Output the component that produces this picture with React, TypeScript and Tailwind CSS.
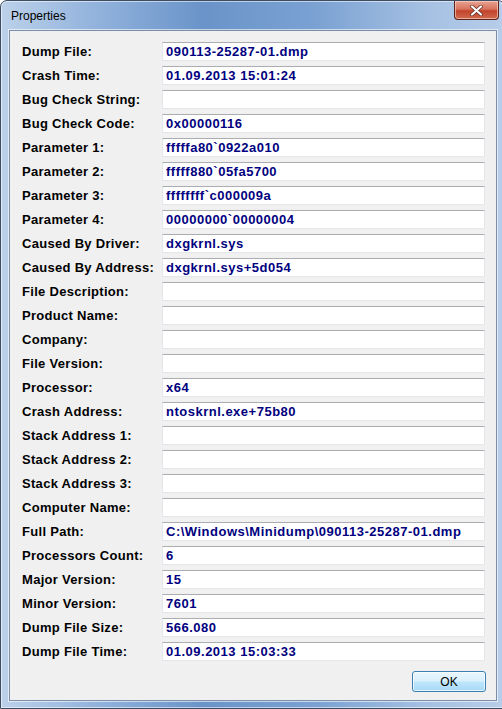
const rows: [string, string][] = [
  ['Dump File:', '090113-25287-01.dmp'],
  ['Crash Time:', '01.09.2013 15:01:24'],
  ['Bug Check String:', ''],
  ['Bug Check Code:', '0x00000116'],
  ['Parameter 1:', 'fffffa80`0922a010'],
  ['Parameter 2:', 'fffff880`05fa5700'],
  ['Parameter 3:', 'ffffffff`c000009a'],
  ['Parameter 4:', '00000000`00000004'],
  ['Caused By Driver:', 'dxgkrnl.sys'],
  ['Caused By Address:', 'dxgkrnl.sys+5d054'],
  ['File Description:', ''],
  ['Product Name:', ''],
  ['Company:', ''],
  ['File Version:', ''],
  ['Processor:', 'x64'],
  ['Crash Address:', 'ntoskrnl.exe+75b80'],
  ['Stack Address 1:', ''],
  ['Stack Address 2:', ''],
  ['Stack Address 3:', ''],
  ['Computer Name:', ''],
  ['Full Path:', 'C:\\Windows\\Minidump\\090113-25287-01.dmp'],
  ['Processors Count:', '6'],
  ['Major Version:', '15'],
  ['Minor Version:', '7601'],
  ['Dump File Size:', '566.080'],
  ['Dump File Time:', '01.09.2013 15:03:33'],
]

export default function App() {
  return (
    <div className="w-[502px] h-[709px] bg-white overflow-hidden font-['Liberation_Sans',Arial,sans-serif]">
      <div className="w-[505px] h-[709px] flex flex-col rounded-t-[7px] border border-[#3d4d62] bg-[linear-gradient(90deg,#bcd1ea_0%,#94b4dd_18%,#6a94c9_40%,#7aa1d2_62%,#a6c1e3_85%,#b7cde9_100%)] shadow-[inset_0_0_0_1px_rgba(255,255,255,0.55)]">
        {/* title bar */}
        <div className="h-[29px] shrink-0 flex items-start justify-between">
          <span className="mt-[8px] ml-[10px] text-[12px] text-black leading-[14px]">Properties</span>
          <div className="mr-[5px] w-[45px] h-[19px] rounded-b-[4px] border border-t-0 border-[#5a231b] bg-[linear-gradient(180deg,#e8a493_0%,#d7735c_45%,#c2432a_55%,#cf6a4e_100%)] shadow-[inset_0_0_0_1px_rgba(255,220,210,0.6)] flex items-center justify-center">
            <svg width="13" height="11" viewBox="0 0 13 11">
              <path d="M2 1.5 L11 9.5 M11 1.5 L2 9.5" stroke="#5a2a22" strokeWidth="3.6" strokeLinecap="round" />
              <path d="M2 1.5 L11 9.5 M11 1.5 L2 9.5" stroke="#ffffff" strokeWidth="2.2" strokeLinecap="round" />
            </svg>
          </div>
        </div>
        {/* client area */}
        <div className="ml-[8px] mr-[7px] w-[488px] h-[671px] border border-[#7a8ea8] bg-[#f0f0f0] shadow-[0_0_0_1px_rgba(255,255,255,0.6)] flex flex-col">
          <div className="pt-[11px] pl-[12px] flex flex-col gap-[5px]">
            {rows.map(([label, value]) => (
              <div key={label} className="flex items-center h-[19px]">
                <span className="w-[140px] text-[13px] font-bold text-black tracking-[0.3px] leading-none">{label}</span>
                <div className="w-[323px] h-[19px] bg-white border border-[#e3e6ea] border-t-[#abadb3] flex items-center pl-[3px]">
                  <span className="text-[13px] font-bold text-[#000080] tracking-[0.5px] leading-none whitespace-nowrap">{value}</span>
                </div>
              </div>
            ))}
          </div>
          <div className="flex justify-end pr-[10px] mt-[10px]">
            <button className="w-[74px] h-[21px] rounded-[3px] border border-[#3c7fb1] bg-[linear-gradient(180deg,#eaf6fd_0%,#d9f0fc_48%,#bee6fd_52%,#a7d9f5_100%)] shadow-[inset_0_0_0_1px_rgba(255,255,255,0.7)] text-[12px] text-black leading-none">
              OK
            </button>
          </div>
        </div>
      </div>
    </div>
  )
}
